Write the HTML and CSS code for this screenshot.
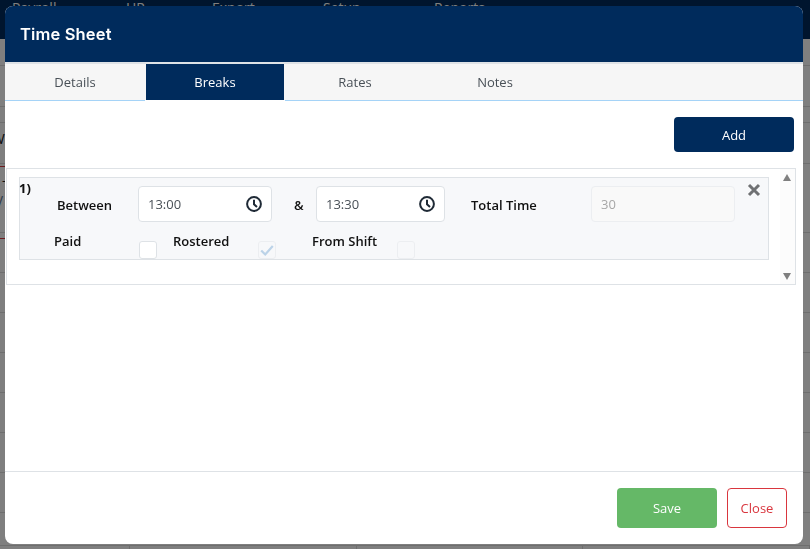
FILE: index.html
```html
<!DOCTYPE html>
<html lang="en">
<head>
<meta charset="utf-8">
<title>Time Sheet</title>
<link rel="stylesheet" href="styles.css">
</head>
<body>
<div class="page">
  <nav class="topnav">
    <span class="nav-a">Payroll</span><span class="nav-b">HR</span><span class="nav-c">Export</span><span class="nav-d">Setup</span><span class="nav-e">Reports</span>
  </nav>
  <div class="bg-row h26"></div>
  <div class="bg-row h41"></div>
  <div class="bg-row h16"></div>
  <div class="bg-row h41"></div>
  <div class="bg-row h69"></div>
  <div class="bg-row h40"></div>
  <div class="bg-row h40"></div>
  <div class="bg-row h40"></div>
  <div class="bg-row h40"></div>
  <div class="bg-row h40"></div>
  <div class="bg-row h40"></div>
  <div class="bg-row h40"></div>
  <div class="bg-row h33"></div>
  <div class="bg-cells"><i></i><i></i><i></i><i></i></div>
  <span class="bg-w">W</span>
  <div class="bg-box"><span class="bg-dash">-</span><span class="bg-y">y</span></div>
</div>
<div class="backdrop"></div>
<section class="modal">
  <header class="modal-head"><h1>Time Sheet</h1></header>
  <div class="tabs">
    <a class="tab first">Details</a>
    <a class="tab active">Breaks</a>
    <a class="tab">Rates</a>
    <a class="tab">Notes</a>
  </div>
  <div class="modal-body">
    <div class="add-row"><button class="btn-add">Add</button></div>
    <div class="list">
      <div class="list-scroll">
        <div class="break-card">
          <span class="num">1)</span>
          <svg class="remove" viewBox="0 0 14 14" width="14" height="14"><path d="M2 2 12 12M12 2 2 12" stroke="#6f7173" stroke-width="3" fill="none"/></svg>
          <div class="row row-1">
            <label class="lab lab-between">Between</label>
            <div class="field f1"><span>13:00</span>
              <svg viewBox="0 0 18 18" width="18" height="18"><circle cx="9" cy="9" r="6.900" fill="none" stroke="#1f2a36" stroke-width="2"/><path d="M9 4.800V9.300L12 12" fill="none" stroke="#1f2a36" stroke-width="2"/></svg>
            </div>
            <label class="lab lab-amp">&amp;</label>
            <div class="field f2"><span>13:30</span>
              <svg viewBox="0 0 18 18" width="18" height="18"><circle cx="9" cy="9" r="6.900" fill="none" stroke="#1f2a36" stroke-width="2"/><path d="M9 4.800V9.300L12 12" fill="none" stroke="#1f2a36" stroke-width="2"/></svg>
            </div>
            <label class="lab lab-total">Total Time</label>
            <div class="field f3 disabled"><span>30</span></div>
          </div>
          <div class="row row-2">
            <label class="lab lab-paid">Paid</label>
            <span class="check c1"></span>
            <label class="lab lab-rostered">Rostered</label>
            <span class="check c2 dim"><svg viewBox="0 0 18 18" width="16" height="16"><path d="M2.500 9.500 7 14 15.500 4.500" fill="none" stroke="#bcd3e8" stroke-width="2.500"/></svg></span>
            <label class="lab lab-shift">From Shift</label>
            <span class="check c3 dim"></span>
          </div>
        </div>
      </div>
      <div class="scrollbar"><i class="up"></i><i class="down"></i></div>
    </div>
  </div>
  <footer class="modal-foot">
    <button class="btn-save">Save</button>
    <button class="btn-close">Close</button>
  </footer>
</section>
</body>
</html>
```
FILE: styles.css
```css
* { box-sizing: border-box; }
html, body { margin: 0; height: 100%; overflow: hidden; background: #fff; font-family: "Open Sans", "Noto Sans", sans-serif; }
.page { height: 549px; background: #fff; position: relative; overflow: hidden; }
.topnav { height: 39px; background: #002b5c; color: #fff; font-size: 14px; position: relative; line-height: 14px; }
.topnav span { position: absolute; top: 1px; }
.nav-a { left: 12px; } .nav-b { left: 126px; } .nav-c { left: 212px; } .nav-d { left: 323px; } .nav-e { left: 434px; }
.bg-row { border-bottom: 1px solid #dcdcdc; }
.h16 { height: 16px; } .h26 { height: 27px; } .h33 { height: 33px; } .h40 { height: 40px; } .h41 { height: 41px; } .h69 { height: 69px; }
.bg-cells { display: flex; height: 10px; }
.bg-cells i { display: block; width: 230px; border-right: 1px solid #dcdcdc; }
.bg-cells i:first-child { width: 132px; }
.bg-w { position: absolute; left: -9px; top: 128px; font-size: 15px; color: #222; }
.bg-box { position: absolute; left: -20px; top: 166px; width: 300px; height: 73px; border-top: 1px solid #d9363e; border-bottom: 1px solid #d9363e; font-size: 13px; }
.bg-dash { position: absolute; left: 22px; top: 4px; color: #222; }
.bg-y { position: absolute; left: 16px; top: 22px; color: #5a7390; font-size: 14px; }
.backdrop { position: fixed; inset: 0; background: rgba(0,0,0,.5); }
.modal { position: fixed; left: 5px; top: 6px; width: 798px; height: 538px; background: #fff; border-radius: 8px; display: flex; flex-direction: column; overflow: hidden; }
.modal-head { height: 56px; background: #002b5c; display: flex; align-items: center; padding: 0 15px; flex: none; }
.modal-head h1 { margin: 0; color: #fff; font: 600 16.500px/1 "Inter", sans-serif; letter-spacing: .15px; }
.tabs { height: 39px; flex: none; display: flex; background: #f6f6f6; border-top: 2px solid #dee2e6; border-bottom: 1px solid #a5d3f7; }
.tab { width: 140px; text-align: center; font-size: 13px; line-height: 36px; color: #495057; }
.tab.first { width: 141px; padding-right: 1px; }
.tab.active { width: 138px; background: #002b5c; color: #fff; margin-right: 1px; position: relative; }
.tab.active::after { content: ""; position: absolute; left: -1px; right: -1px; top: 36px; height: 1px; background: #fff; }
.modal-body { flex: 1; min-height: 0; padding: 16px 9px 0 1px; }
.add-row { display: flex; justify-content: flex-end; }
.btn-add { width: 120px; height: 35px; background: #002b5c; color: #fff; border: 0; border-radius: 4px; font: 500 13px "Open Sans", sans-serif; }
.list { margin-top: 16px; height: 117px; border: 1px solid #dee2e6; margin-right: -2px; display: flex; }
.list-scroll { flex: 1; padding: 8px 11px 0 12px; }
.scrollbar { width: 15px; background: #fcfcfc; position: relative; }
.scrollbar i { position: absolute; left: 3px; width: 0; height: 0; border-left: 4.500px solid transparent; border-right: 4.500px solid transparent; }
.scrollbar .up { top: 5px; border-bottom: 7px solid #7f7f7f; }
.scrollbar .down { bottom: 4px; border-top: 7px solid #7f7f7f; }
.break-card { height: 83px; background: #f7f8fa; border: 1px solid #dee2e6; position: relative; }
.num { position: absolute; left: -1px; top: 2px; font-size: 13px; font-weight: 700; line-height: 16px; color: #111; }
.remove { position: absolute; left: 727px; top: 5px; }
.row { display: flex; align-items: center; position: relative; }
.row-1 { height: 35px; margin-top: 8px; }
.row-2 { height: 29px; margin-top: 10px; align-items: flex-start; }
.lab { font-size: 13px; font-weight: 600; color: #111; line-height: 18px; white-space: nowrap; }
.row-1 .lab { margin-top: 2px; }
.lab-between { margin-left: 37px; width: 81px; }
.lab-amp { margin-left: 22px; width: 22px; }
.lab-total { margin-left: 26px; width: 120px; }
.field { height: 36px; background: #fff; border: 1px solid #dee2e6; border-radius: 4px; display: flex; align-items: center; justify-content: space-between; padding: 0 8px 0 9px; font-size: 13px; color: #495057; }
.f1 { width: 134px; } .f2 { width: 129px; } .f3 { width: 144px; }
.field.disabled { background: #f9f9f9; color: #a7a7a7; border-color: #eceef1; }
.lab-paid { margin-left: 34px; width: 85px; margin-top: 1px; }
.lab-rostered { margin-left: 16px; width: 85px; margin-top: 1px; }
.lab-shift { margin-left: 36px; width: 85px; margin-top: 1px; }
.check { width: 18px; height: 18px; background: #fff; border: 1px solid #dee2e6; border-radius: 3px; margin-top: 10px; display: flex; align-items: center; justify-content: center; flex: none; }
.check.dim { background: #f7f8fa; border-color: #eceef1; }
.modal-foot { height: 73px; flex: none; border-top: 1px solid #dee2e6; display: flex; justify-content: flex-end; align-items: flex-start; gap: 10px; padding: 16px 16px 0 0; }
.btn-save { width: 100px; height: 40px; background: #65b867; color: #fff; border: 0; border-radius: 4px; font: 400 13px "Open Sans", sans-serif; }
.btn-close { width: 60px; height: 40px; background: #fff; color: #d9363e; border: 1px solid #d9363e; border-radius: 4px; font: 400 13px "Open Sans", sans-serif; }
```
